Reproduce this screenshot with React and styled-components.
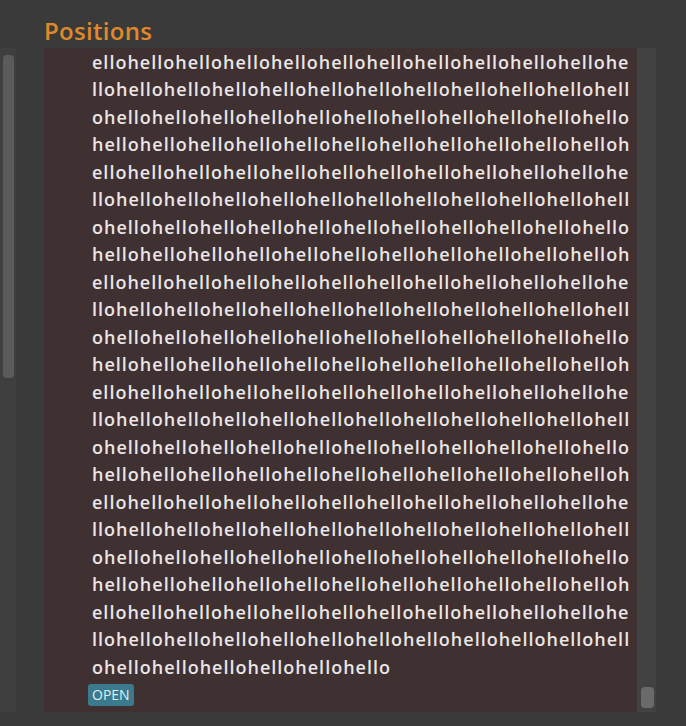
import { styled, createGlobalStyle } from "styled-components";

const GlobalStyle = createGlobalStyle`
  body {
    margin: 0;
    background: #3a3a3a;
    font-family: "Open Sans", "Noto Sans", sans-serif;
  }
`;

const TEXT = "ello" + "hello".repeat(253);

export default function App() {
  return (
    <>
      <GlobalStyle />
      <Page>
        <Header>Positions</Header>
        <Body>
          <Track $width={16}>
            <Thumb $top={7} $height={323} $inset={3} $color="#5b5b5b" />
          </Track>
          <Gap />
          <Panel>
            <Message>{TEXT}</Message>
            <OpenButton>OPEN</OpenButton>
          </Panel>
          <Track $width={19} $color="#424242">
            <Thumb $top={639} $height={21} $inset={4} $color="#6a6a6a" />
          </Track>
        </Body>
      </Page>
    </>
  );
}

const Page = styled.div`
  display: flex;
  flex-direction: column;
  height: 726px;
`;

const Header = styled.h1`
  margin: 0;
  padding: 16px 0 2px 44px;
  height: 30px;
  line-height: 30px;
  font-size: 24px;
  font-weight: 600;
  letter-spacing: 0.3px;
  color: #e0892a;
`;

const Body = styled.div`
  display: flex;
  height: 664px;
`;

const Track = styled.div`
  position: relative;
  width: ${(p) => p.$width}px;
  background: ${(p) => p.$color || "#3f3f3f"};
  flex-shrink: 0;
`;

const Thumb = styled.div`
  position: absolute;
  top: ${(p) => p.$top}px;
  left: ${(p) => p.$inset}px;
  right: 2px;
  height: ${(p) => p.$height}px;
  background: ${(p) => p.$color};
  border-radius: 4px;
`;

const Gap = styled.div`
  width: 28px;
  flex-shrink: 0;
`;

const Panel = styled.div`
  width: 593px;
  flex-shrink: 0;
  box-sizing: border-box;
  background: #3f3131;
  padding: 3px 6px 6px 44px;
  display: flex;
  flex-direction: column;
  justify-content: flex-end;
  overflow: hidden;
`;

const Message = styled.p`
  margin: 0 0 1px 4px;
  font-size: 18px;
  font-weight: 600;
  line-height: 27.5px;
  letter-spacing: 1px;
  color: #ebe5e5;
  word-break: break-all;
`;

const OpenButton = styled.button`
  align-self: flex-start;
  margin-top: 2px;
  height: 22px;
  padding: 0 4px;
  border: 0;
  border-radius: 3px;
  background: #3b7a8d;
  color: #dff0f5;
  font-family: inherit;
  font-size: 14px;
  line-height: 22px;
`;
